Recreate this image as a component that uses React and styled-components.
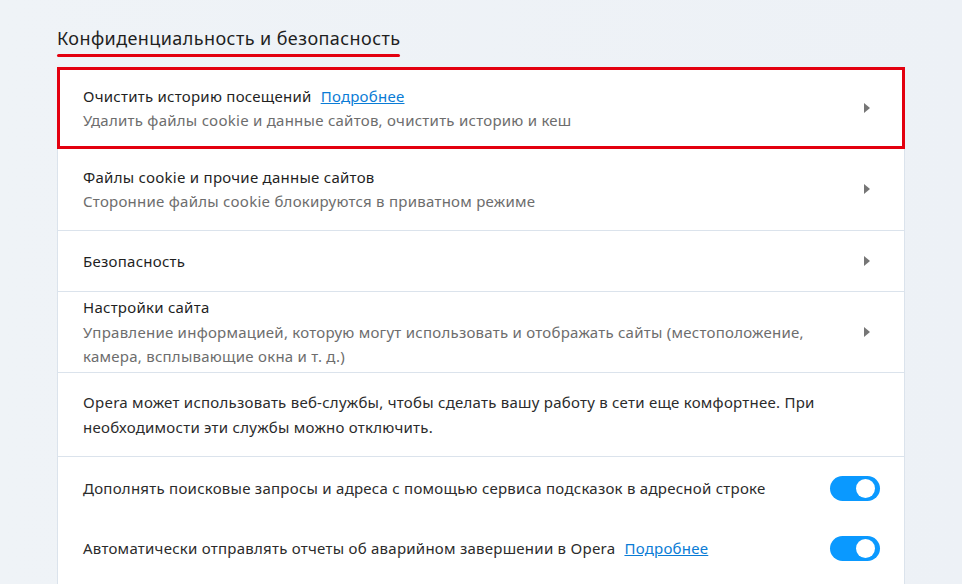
import React from 'react';
import styled, { createGlobalStyle } from 'styled-components';

const GlobalStyle = createGlobalStyle`
  html, body {
    margin: 0;
    padding: 0;
    background: #edf1f6;
    overflow: hidden;
  }
  body {
    font-family: "Noto Sans", "Open Sans", sans-serif;
    color: #222;
  }
`;

const Page = styled.div`
  width: 962px;
  height: 584px;
  padding: 26px 0 0 57px;
  box-sizing: border-box;
  background: linear-gradient(90deg, #eff3f7 0%, #edf1f6 100%);
`;

const Heading = styled.h2`
  display: inline-block;
  margin: 0 0 11px;
  font-size: 18px;
  font-weight: 400;
  line-height: 24px;
  letter-spacing: 0.42px;
  color: #1f1f1f;
  position: relative;
  padding-bottom: 7px;

  &::after {
    content: '';
    position: absolute;
    left: 0;
    right: 0;
    bottom: 0;
    height: 3px;
    border-radius: 2px;
    background: #e3000f;
  }
`;

const Card = styled.div`
  width: 848px;
  padding-bottom: 20px;
  background: #fff;
  border-left: 1px solid #dbe3ec;
  border-right: 1px solid #dbe3ec;
  box-sizing: border-box;
`;

const Row = styled.div`
  display: flex;
  align-items: center;
  justify-content: space-between;
  min-height: ${p => p.$h}px;
  padding: 0 24px 0 25px;
  box-sizing: border-box;
  border-bottom: ${p => (p.$line ? '1px solid #dbe3ec' : 'none')};
  outline: ${p => (p.$marked ? '3px solid #e3000f' : 'none')};
  outline-offset: -2px;
  position: relative;
`;

const Text = styled.div`
  flex: 1;
  font-size: 15px;
  line-height: 24.5px;
  letter-spacing: 0.25px;
  padding-right: 40px;
`;

const Title = styled.div`
  color: #1f1f1f;
`;

const Sub = styled.div`
  color: #6d6d6d;
`;

const Plain = styled.div`
  color: #2b2b2b;
`;

const MoreLink = styled.a`
  color: #0a7cd6;
  text-decoration: underline;
  margin-left: 9px;
  cursor: pointer;
`;

const Arrow = styled.span`
  width: 0;
  height: 0;
  border-top: 5px solid transparent;
  border-bottom: 5px solid transparent;
  border-left: 6px solid #767676;
  margin-right: 10px;
`;

const Toggle = styled.span`
  width: 50px;
  height: 25px;
  border-radius: 13px;
  background: #0a99ff;
  position: relative;
  flex-shrink: 0;

  &::after {
    content: '';
    position: absolute;
    right: 5px;
    top: 3px;
    width: 19px;
    height: 19px;
    border-radius: 50%;
    background: #fff;
  }
`;

export default function App() {
  return (
    <>
      <GlobalStyle />
      <Page>
        <Heading>Конфиденциальность и безопасность</Heading>
        <Card>
          <Row $h={80} $marked>
            <Text>
              <Title>
                Очистить историю посещений<MoreLink>Подробнее</MoreLink>
              </Title>
              <Sub>Удалить файлы cookie и данные сайтов, очистить историю и кеш</Sub>
            </Text>
            <Arrow />
          </Row>
          <Row $h={83} $line>
            <Text>
              <Title>Файлы cookie и прочие данные сайтов</Title>
              <Sub>Сторонние файлы cookie блокируются в приватном режиме</Sub>
            </Text>
            <Arrow />
          </Row>
          <Row $h={61} $line>
            <Text>
              <Title>Безопасность</Title>
            </Text>
            <Arrow />
          </Row>
          <Row $h={81} $line>
            <Text>
              <Title>Настройки сайта</Title>
              <Sub>
                Управление информацией, которую могут использовать и отображать сайты (местоположение,
                камера, всплывающие окна и т. д.)
              </Sub>
            </Text>
            <Arrow />
          </Row>
          <Row $h={84} $line>
            <Text>
              <Plain>
                Opera может использовать веб-службы, чтобы сделать вашу работу в сети еще комфортнее. При
                необходимости эти службы можно отключить.
              </Plain>
            </Text>
          </Row>
          <Row $h={63}>
            <Text>
              <Plain>Дополнять поисковые запросы и адреса с помощью сервиса подсказок в адресной строке</Plain>
            </Text>
            <Toggle />
          </Row>
          <Row $h={56}>
            <Text>
              <Plain>
                Автоматически отправлять отчеты об аварийном завершении в Opera<MoreLink>Подробнее</MoreLink>
              </Plain>
            </Text>
            <Toggle />
          </Row>
        </Card>
      </Page>
    </>
  );
}
